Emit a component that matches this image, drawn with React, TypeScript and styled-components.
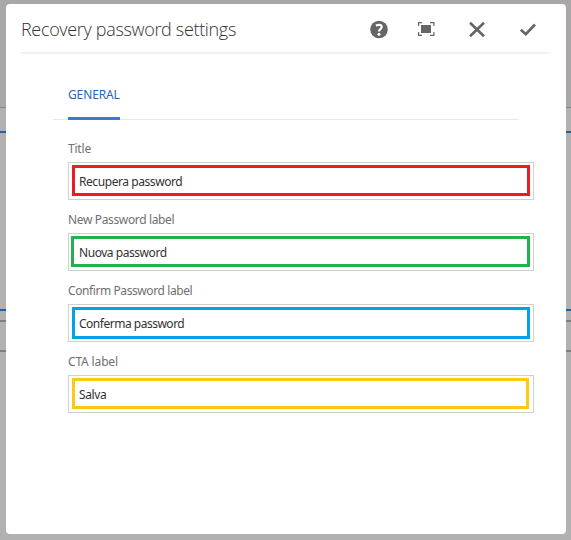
import React from "react";
import styled, { createGlobalStyle } from "styled-components";

const GlobalStyle = createGlobalStyle`
  * { box-sizing: border-box; }
  html, body, #root { height: 100%; margin: 0; }
  body { background: #b1b1b1; font-family: "Noto Sans", "Open Sans", sans-serif; overflow: hidden; }
`;

const Stage = styled.div`
  display: grid;
  width: 571px;
  height: 540px;
  grid-template-columns: 6px 560px 5px;
  grid-template-rows: 4px 530px 6px;
`;

const Backdrop = styled.div`
  grid-area: 1 / 1 / 4 / 4;
  display: flex;
  flex-direction: column;
`;

const Band = styled.div<{ $h: number; $color: string }>`
  flex: none;
  height: ${(p) => p.$h}px;
  background: ${(p) => p.$color};
`;

const Dialog = styled.section`
  grid-area: 2 / 2;
  z-index: 1;
  padding: 0 15px;
  background: #fff;
  border-radius: 4px;
`;

const Header = styled.header`
  display: flex;
  align-items: center;
  justify-content: space-between;
  height: 50px;
  border-bottom: 2px solid #f2f2f2;
`;

const Title = styled.h1`
  margin: 0;
  padding-top: 2px;
  font: 300 18px/26px "Open Sans", "Noto Sans", sans-serif;
  letter-spacing: -0.33px;
  color: #323232;
  white-space: nowrap;
`;

const Actions = styled.div`
  display: flex;
  gap: 31px;
  padding: 2px 13px 0 0;
`;

const IconButton = styled.button`
  display: flex;
  width: 19px;
  height: 18px;
  padding: 0;
  border: 0;
  background: none;
  color: #656565;

  svg { display: block; flex: none; overflow: visible; }
`;

const Tabs = styled.nav`
  display: flex;
  width: 466px;
  height: 66px;
  margin-left: 32px;
  padding-left: 15px;
  border-bottom: 1px solid #e9e9e9;
`;

const Tab = styled.a<{ $spacing: number }>`
  width: 52px;
  height: 66px;
  padding-top: 31px;
  border-bottom: 3px solid #4178cd;
  font-size: 12px;
  line-height: 20px;
  letter-spacing: ${(p) => p.$spacing}px;
  color: #2765b8;
  white-space: nowrap;
`;

const Form = styled.form`
  display: flex;
  flex-direction: column;
  width: 466px;
  margin: 19px 0 0 47px;
`;

const Field = styled.label`
  display: block;
  height: 71px;
`;

const Label = styled.span<{ $spacing: number }>`
  display: block;
  height: 23px;
  font-size: 12px;
  line-height: 20px;
  letter-spacing: ${(p) => p.$spacing}px;
  color: #707070;
`;

const InputFrame = styled.span<{ $left: number; $right: number }>`
  display: block;
  height: 38px;
  padding: 2px ${(p) => p.$right}px 0 ${(p) => p.$left}px;
  border: 1px solid #d0d0d0;
`;

const Input = styled.input<{ $color: string; $h: number; $indent: number; $spacing: number }>`
  display: block;
  width: 100%;
  height: ${(p) => p.$h}px;
  padding: 1px 0 0 ${(p) => p.$indent}px;
  border: 3px solid ${(p) => p.$color};
  outline: 0;
  background: #fff;
  font: 12px/18px "Noto Sans", "Open Sans", sans-serif;
  letter-spacing: ${(p) => p.$spacing}px;
  color: #323232;
`;

const bands: [number, string][] = [
  [107, "#a9a7a8"],
  [1, "#838383"],
  [23, "#b1b1b1"],
  [2, "#1d62a4"],
  [176, "#b1b1b1"],
  [2, "#1d62a4"],
  [9, "#b1b1b1"],
  [2, "#7f7f7f"],
  [28, "#b1b1b1"],
  [2, "#7f7f7f"],
];

const fields = [
  { label: "Title", value: "Recupera password", color: "#ed1c24", h: 31, left: 3, right: 3, ls: -0.2, vs: -0.43 },
  { label: "New Password label", value: "Nuova password", color: "#22b14c", h: 31, left: 2, right: 3, ls: -0.36, vs: -0.45 },
  { label: "Confirm Password label", value: "Conferma password", color: "#00a2e8", h: 32, left: 3, right: 3, ls: -0.41, vs: -0.49 },
  { label: "CTA label", value: "Salva", color: "#ffc90e", h: 31, left: 3, right: 4, ls: -0.15, vs: -0.35 },
];

const HelpIcon = () => (
  <svg width="19" height="18" viewBox="0 0 19 18">
    <circle cx="10" cy="9.5" r="8.8" fill="currentColor" />
    <path d="M7 5.7C9.2 4.3 12.7 4.5 12.7 7C12.7 9.1 10 9.2 10 11.4" fill="none" stroke="#fff" strokeWidth="2.2" />
    <circle cx="10" cy="14.3" r="1.5" fill="#fff" />
  </svg>
);

const FullscreenIcon = () => (
  <svg width="19" height="18" viewBox="0 0 19 18">
    <path d="M2 5h10v8H2z" fill="currentColor" />
    <path d="M-0.4 6V2.7H3M11 2.7H14.9V6M14.9 12V15.4H11M3 15.4H-0.4V12" fill="none" stroke="currentColor" strokeWidth="1.2" />
  </svg>
);

const CloseIcon = () => (
  <svg width="19" height="18" viewBox="0 0 19 18">
    <path d="M1 2.8L15 16.2M15 2.8L1 16.2" fill="none" stroke="currentColor" strokeWidth="2.6" />
  </svg>
);

const CheckIcon = () => (
  <svg width="19" height="18" viewBox="0 0 19 18">
    <path d="M1.8 9.7L6.8 14.2L16 4.5" fill="none" stroke="currentColor" strokeWidth="2.6" />
  </svg>
);

export default function App() {
  return (
    <>
      <GlobalStyle />
      <Stage>
        <Backdrop>
          {bands.map(([h, color], i) => (
            <Band key={i} $h={h} $color={color} />
          ))}
        </Backdrop>
        <Dialog role="dialog" aria-label="Recovery password settings">
          <Header>
            <Title>Recovery password settings</Title>
            <Actions>
              <IconButton aria-label="Help"><HelpIcon /></IconButton>
              <IconButton aria-label="Toggle fullscreen"><FullscreenIcon /></IconButton>
              <IconButton aria-label="Cancel"><CloseIcon /></IconButton>
              <IconButton aria-label="Done"><CheckIcon /></IconButton>
            </Actions>
          </Header>
          <Tabs>
            <Tab $spacing={-0.12}>GENERAL</Tab>
          </Tabs>
          <Form>
            {fields.map((f) => (
              <Field key={f.label}>
                <Label $spacing={f.ls}>{f.label}</Label>
                <InputFrame $left={f.left} $right={f.right}>
                  <Input
                    $color={f.color}
                    $h={f.h}
                    $indent={7 - f.left}
                    $spacing={f.vs}
                    defaultValue={f.value}
                  />
                </InputFrame>
              </Field>
            ))}
          </Form>
        </Dialog>
      </Stage>
    </>
  );
}
